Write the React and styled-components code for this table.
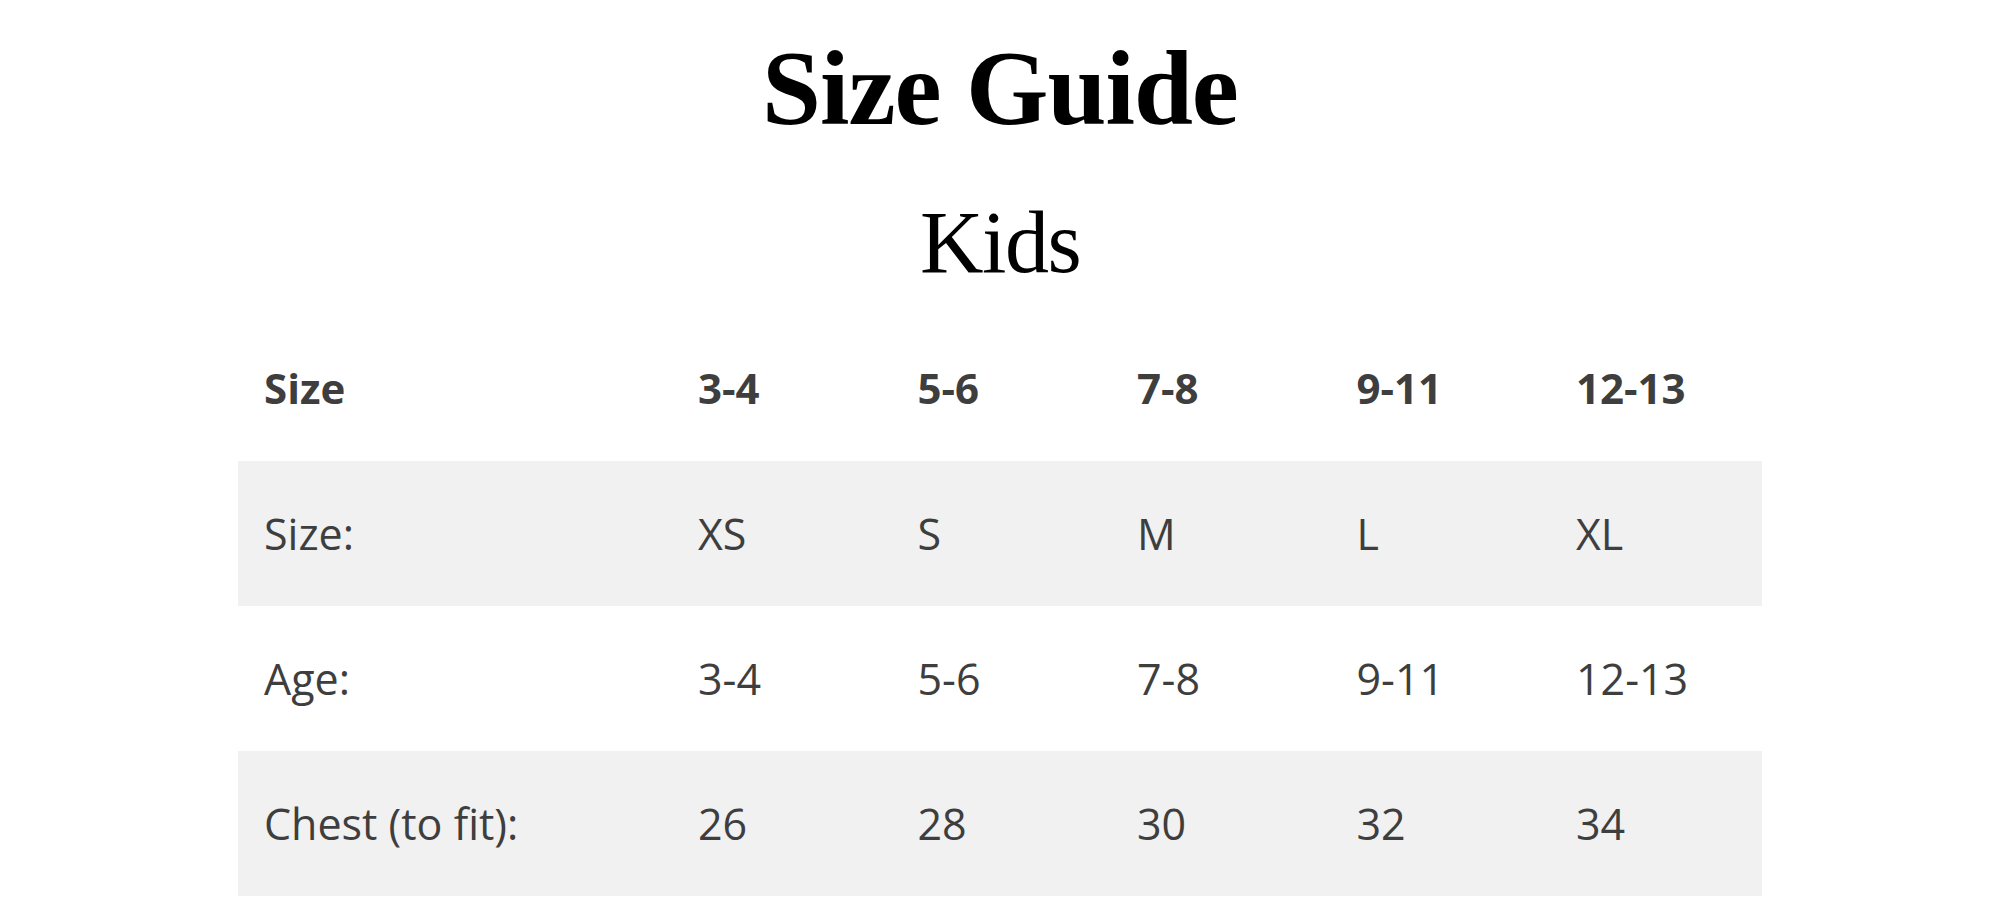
import styled, { createGlobalStyle } from "styled-components";

const GlobalStyle = createGlobalStyle`
  html, body {
    margin: 0;
    padding: 0;
    background: #ffffff;
  }
`;

const Page = styled.div`
  width: 2000px;
  display: flex;
  flex-direction: column;
  align-items: center;
`;

const Title = styled.h1`
  margin: 36px 0 0;
  font-family: "Liberation Serif", "Times New Roman", serif;
  font-weight: 700;
  font-size: 106px;
  line-height: 1;
  letter-spacing: -1px;
  color: #000;
`;

const Subtitle = styled.h2`
  margin: 57px 0 0;
  font-family: "Liberation Serif", "Times New Roman", serif;
  font-weight: 400;
  font-size: 88px;
  line-height: 1;
  letter-spacing: -1.5px;
  color: #000;
`;

const Table = styled.div`
  margin-top: 26px;
  width: 1524px;
  display: flex;
  flex-direction: column;
  font-family: "Open Sans", "Noto Sans", sans-serif;
  font-size: 43px;
  color: #3e3e3e;
`;

const Row = styled.div`
  display: grid;
  grid-template-columns: 434px repeat(4, 219.5px) 1fr;
  height: ${(p) => (p.$head ? "148px" : "145px")};
  align-items: center;
  background: ${(p) => (p.$shaded ? "#f1f1f1" : "transparent")};
  font-weight: ${(p) => (p.$head ? 700 : 400)};
  font-size: ${(p) => (p.$head ? "42px" : "43px")};
`;

const Cell = styled.div`
  padding-left: 26px;
  white-space: nowrap;
`;

const header = ["Size", "3-4", "5-6", "7-8", "9-11", "12-13"];
const rows = [
  ["Size:", "XS", "S", "M", "L", "XL"],
  ["Age:", "3-4", "5-6", "7-8", "9-11", "12-13"],
  ["Chest (to fit):", "26", "28", "30", "32", "34"],
];

export default function App() {
  return (
    <>
      <GlobalStyle />
      <Page>
        <Title>Size Guide</Title>
        <Subtitle>Kids</Subtitle>
        <Table>
          <Row $head>
            {header.map((h, i) => (
              <Cell key={i}>{h}</Cell>
            ))}
          </Row>
          {rows.map((r, i) => (
            <Row key={i} $shaded={i % 2 === 0}>
              {r.map((c, j) => (
                <Cell key={j}>{c}</Cell>
              ))}
            </Row>
          ))}
        </Table>
      </Page>
    </>
  );
}
